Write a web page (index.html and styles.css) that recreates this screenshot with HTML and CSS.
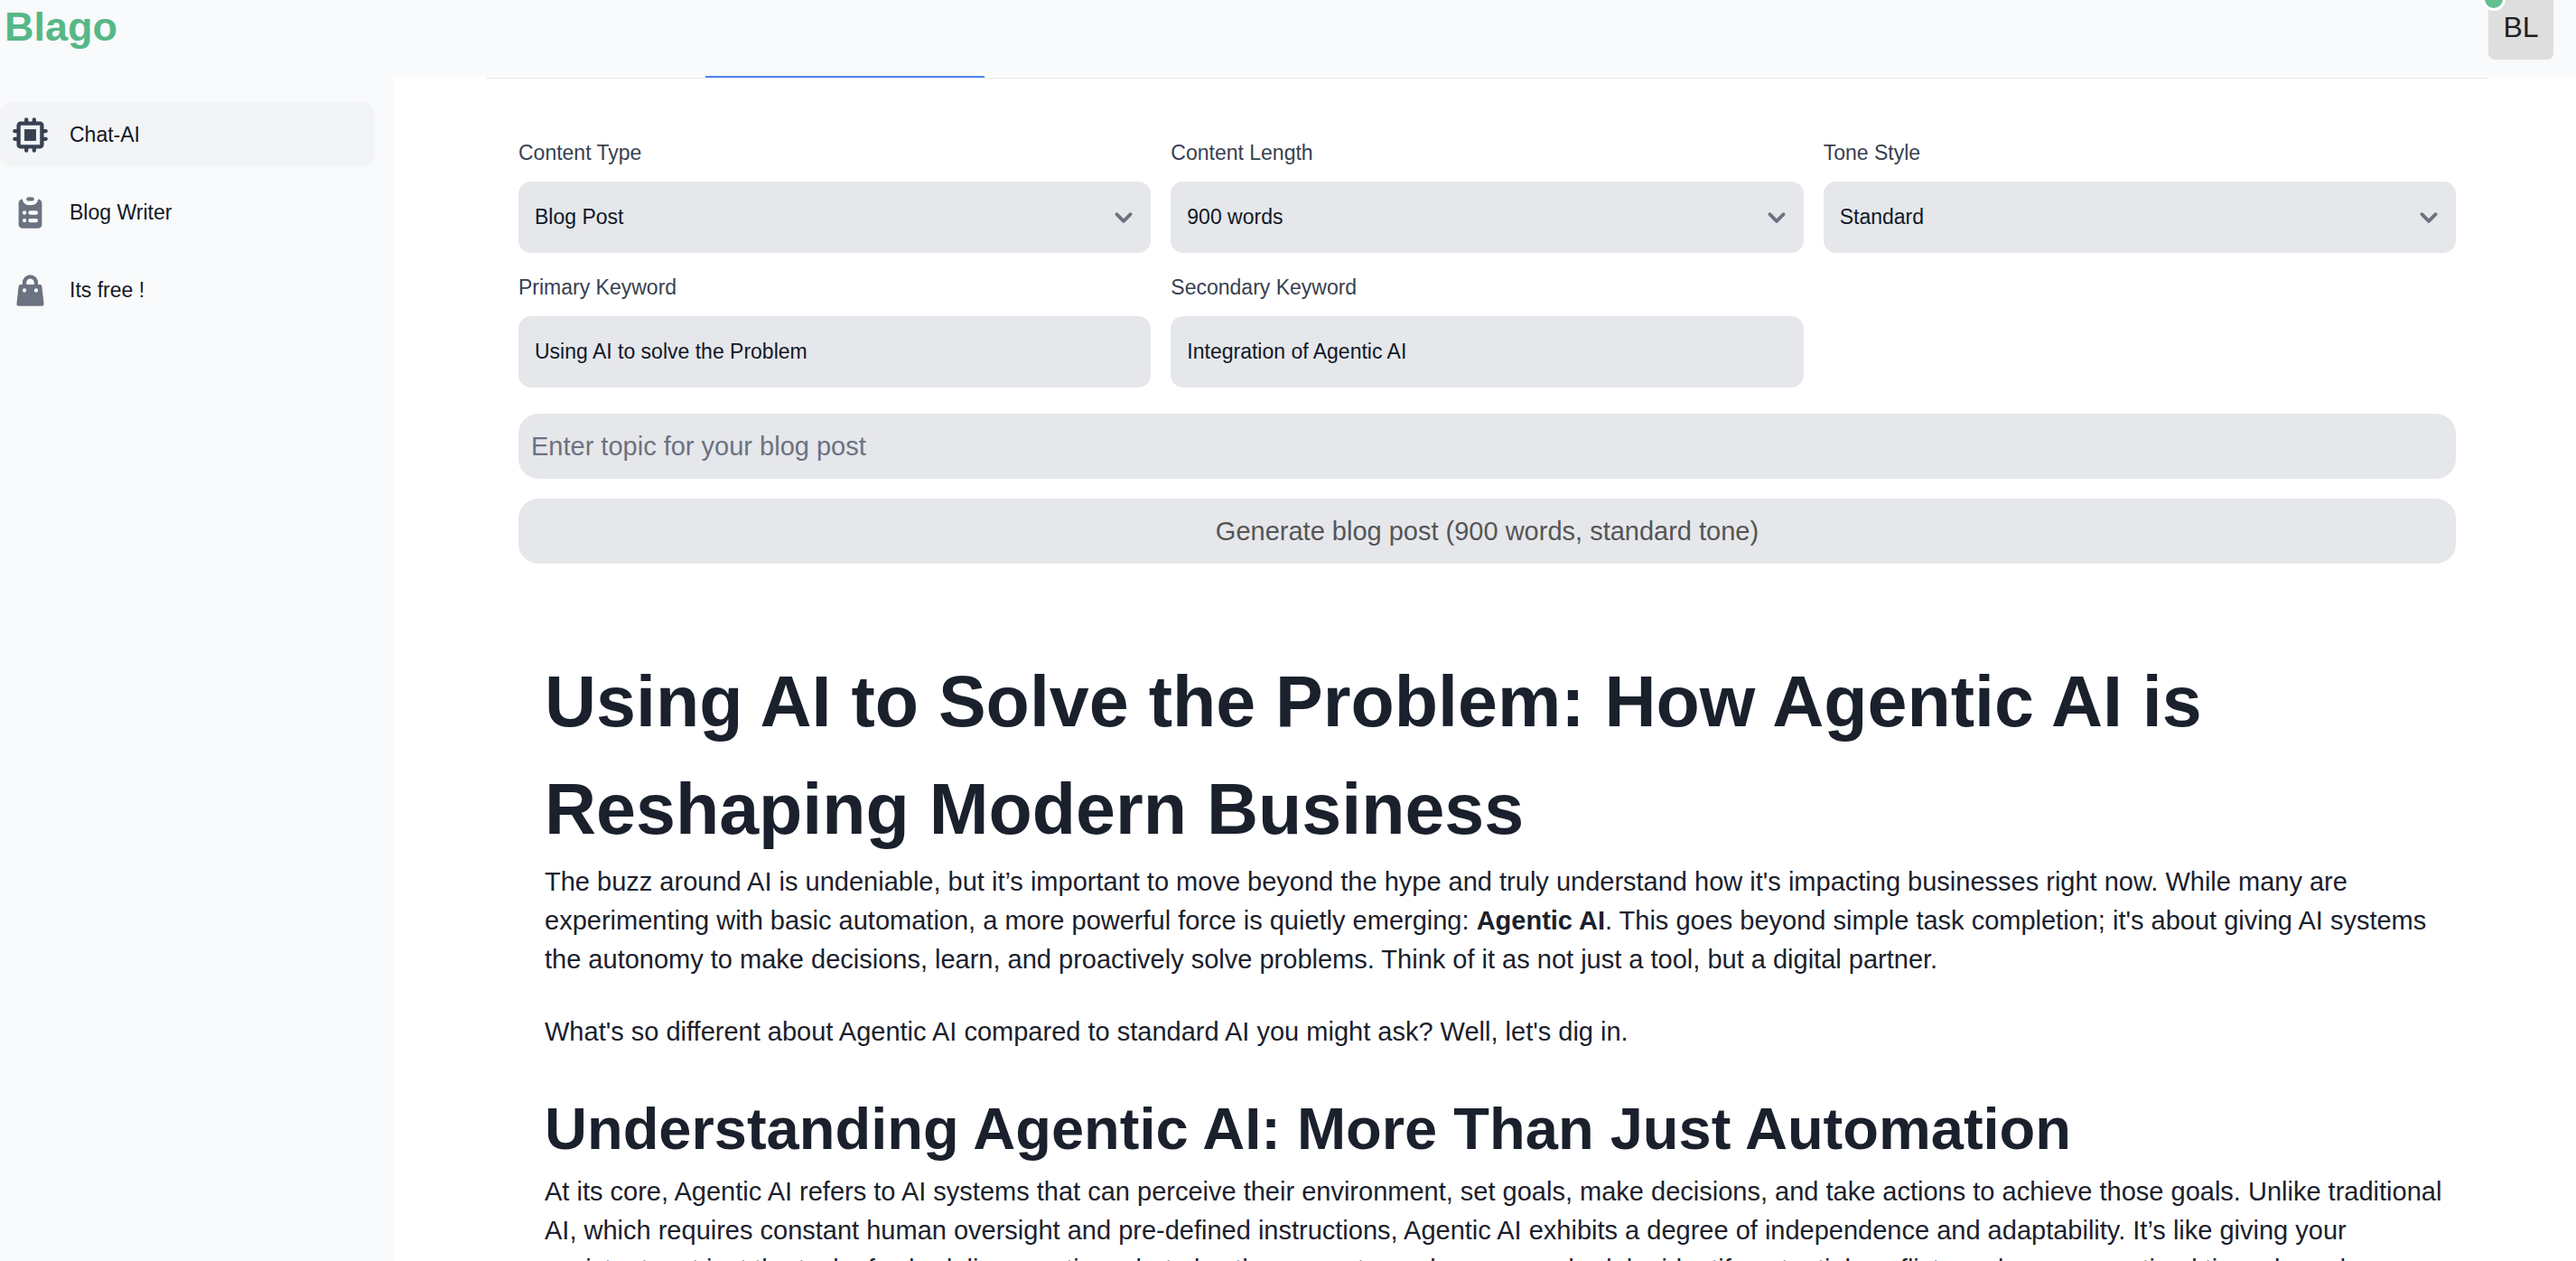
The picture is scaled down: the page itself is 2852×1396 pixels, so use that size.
FILE: index.html
```html
<!DOCTYPE html>
<html lang="en">
<head>
<meta charset="utf-8">
<meta name="viewport" content="width=device-width, initial-scale=1">
<title>Blago</title>
<link rel="stylesheet" href="styles.css">
</head>
<body>
<header class="topbar">
  <a class="brand" href="#">Blago</a>
  <button class="avatar" type="button" aria-label="Account">BL<span class="status"></span></button>
</header>
<div class="layout">
  <aside class="sidebar">
    <nav class="menu">
      <a class="menu-item active" href="#">
        <svg class="icon" viewBox="0 0 20 20" fill="currentColor" aria-hidden="true"><path d="M13 7H7v6h6V7z"/><path fill-rule="evenodd" d="M7 2a1 1 0 012 0v1h2V2a1 1 0 112 0v1h2a2 2 0 012 2v2h1a1 1 0 110 2h-1v2h1a1 1 0 110 2h-1v2a2 2 0 01-2 2h-2v1a1 1 0 11-2 0v-1H9v1a1 1 0 11-2 0v-1H5a2 2 0 01-2-2v-2H2a1 1 0 110-2h1V9H2a1 1 0 010-2h1V5a2 2 0 012-2h2V2zM5 5h10v10H5V5z" clip-rule="evenodd"/></svg>
        <span>Chat-AI</span>
      </a>
      <a class="menu-item" href="#">
        <svg class="icon" viewBox="0 0 20 20" fill="currentColor" aria-hidden="true"><path d="M9 2a1 1 0 000 2h2a1 1 0 100-2H9z"/><path fill-rule="evenodd" d="M4 5a2 2 0 012-2 3 3 0 003 3h2a3 3 0 003-3 2 2 0 012 2v11a2 2 0 01-2 2H6a2 2 0 01-2-2V5zm3 4a1 1 0 000 2h.01a1 1 0 100-2H7zm3 0a1 1 0 000 2h3a1 1 0 100-2h-3zm-3 4a1 1 0 100 2h.01a1 1 0 100-2H7zm3 0a1 1 0 100 2h3a1 1 0 100-2h-3z" clip-rule="evenodd"/></svg>
        <span>Blog Writer</span>
      </a>
      <a class="menu-item" href="#">
        <svg class="icon" viewBox="0 0 20 20" fill="currentColor" aria-hidden="true"><path fill-rule="evenodd" d="M10 2a4 4 0 00-4 4v1H5a1 1 0 00-.994.89l-1 9A1 1 0 004 18h12a1 1 0 00.994-1.11l-1-9A1 1 0 0015 7h-1V6a4 4 0 00-4-4zm2 5V6a2 2 0 10-4 0v1h4zm-6 3a1 1 0 112 0 1 1 0 01-2 0zm7-1a1 1 0 100 2 1 1 0 000-2z" clip-rule="evenodd"/></svg>
        <span>Its free !</span>
      </a>
    </nav>
  </aside>
  <main class="content">
    <div class="tabs"><span class="tab-marker"></span></div>
    <form class="writer">
      <div class="fields">
        <div class="field">
          <label for="type">Content Type</label>
          <select id="type" class="control"><option>Blog Post</option></select>
        </div>
        <div class="field">
          <label for="length">Content Length</label>
          <select id="length" class="control"><option>900 words</option></select>
        </div>
        <div class="field">
          <label for="tone">Tone Style</label>
          <select id="tone" class="control"><option>Standard</option></select>
        </div>
        <div class="field">
          <label for="primary">Primary Keyword</label>
          <input id="primary" class="control" type="text" value="Using AI to solve the Problem">
        </div>
        <div class="field">
          <label for="secondary">Secondary Keyword</label>
          <input id="secondary" class="control" type="text" value="Integration of Agentic AI">
        </div>
      </div>
      <input class="wide topic" type="text" aria-label="Topic" placeholder="Enter topic for your blog post">
      <button class="wide generate" type="button">Generate blog post (900 words, standard tone)</button>
    </form>
    <article class="post">
      <h1>Using AI to Solve the Problem: How Agentic AI is Reshaping Modern Business</h1>
      <p>The buzz around AI is undeniable, but it’s important to move beyond the hype and truly understand how it's impacting businesses right now. While many are experimenting with basic automation, a more powerful force is quietly emerging: <strong>Agentic AI</strong>. This goes beyond simple task completion; it's about giving AI systems the autonomy to make decisions, learn, and proactively solve problems. Think of it as not just a tool, but a digital partner.</p>
      <p>What's so different about Agentic AI compared to standard AI you might ask? Well, let's dig in.</p>
      <h2>Understanding Agentic AI: More Than Just Automation</h2>
      <p>At its core, Agentic AI refers to AI systems that can perceive their environment, set goals, make decisions, and take actions to achieve those goals. Unlike traditional AI, which requires constant human oversight and pre-defined instructions, Agentic AI exhibits a degree of independence and adaptability. It’s like giving your assistant, not just the task of scheduling meetings, but also the power to analyze your schedule, identify potential conflicts and propose optimal times based</p>
    </article>
  </main>
</div>
</body>
</html>
```

FILE: styles.css
```css
*,
*::before,
*::after {
  box-sizing: border-box;
}

html,
body {
  height: 100%;
}

body {
  margin: 0;
  display: flex;
  flex-direction: column;
  overflow: hidden;
  background: #fff;
  color: #111827;
  font-family: "Liberation Sans", Arial, sans-serif;
  font-size: 29px;
  line-height: 43px;
}

button,
input,
select {
  margin: 0;
  border: 0;
  font: inherit;
  color: inherit;
}

.topbar {
  flex: none;
  display: flex;
  justify-content: space-between;
  align-items: flex-start;
  height: 84px;
  padding: 0 25px 0 5px;
  background: #f9fafb;
}

.brand {
  padding-top: 3px;
  color: #56b887;
  font-size: 45px;
  font-weight: 700;
  line-height: 54px;
  text-decoration: none;
}

.avatar {
  position: relative;
  width: 72px;
  height: 66px;
  padding: 0 0 6px;
  border-radius: 0 0 7px 7px;
  background: #dedede;
  color: #212121;
  font-size: 32px;
}

.status {
  position: absolute;
  top: -14px;
  left: -7px;
  width: 26px;
  height: 26px;
  border: 3px solid #fff;
  border-radius: 50%;
  background: #62c08e;
}

.layout {
  flex: 1;
  min-height: 0;
  display: flex;
}

.sidebar {
  flex: none;
  width: 437px;
  padding: 29px 22px 0 0;
  border-top-right-radius: 7px;
  background: #f9fafb;
}

.menu {
  display: flex;
  flex-direction: column;
  gap: 14px;
  font-size: 23px;
}

.menu-item {
  display: flex;
  align-items: center;
  gap: 22px;
  height: 72px;
  padding-left: 12px;
  border-radius: 14px;
  color: #111827;
  text-decoration: none;
}

.menu-item.active {
  background: #f3f4f6;
}

.icon {
  width: 43px;
  height: 43px;
  color: #6b7280;
}

.active .icon {
  color: #374151;
}

.content {
  flex: 1;
  min-width: 0;
  padding: 0 97px 0 101px;
}

.tabs {
  height: 3px;
  padding-left: 243px;
  border-bottom: 1px solid #e5e7eb;
}

.tab-marker {
  display: block;
  width: 309px;
  height: 2px;
  background: #4f83f1;
}

.writer {
  display: flex;
  flex-direction: column;
  gap: 22px;
  padding: 61px 36px 0;
}

.fields {
  display: grid;
  grid-template-columns: repeat(3, 1fr);
  gap: 17px 22px;
  padding-bottom: 7px;
  font-size: 23px;
}

.field {
  display: flex;
  flex-direction: column;
  gap: 11px;
}

.field label {
  color: #374151;
  line-height: 42px;
}

.control {
  width: 100%;
  height: 79px;
  padding: 0 18px;
  border-radius: 14px;
  background: #e5e7eb;
}

select.control {
  appearance: none;
  background: #e5e7eb url("data:image/svg+xml,%3Csvg xmlns='http://www.w3.org/2000/svg' fill='none' viewBox='0 0 20 20'%3E%3Cpath stroke='%236b7280' stroke-linecap='round' stroke-linejoin='round' stroke-width='2' d='M6 8l4 4 4-4'/%3E%3C/svg%3E") right 11px center / 38px 38px no-repeat;
}

.wide {
  width: 100%;
  height: 72px;
  border-radius: 22px;
  background: #e5e7eb;
}

.topic {
  padding: 0 14px;
}

.topic::placeholder {
  color: #6b7280;
  opacity: 1;
}

.generate {
  color: #555;
}

.post {
  padding: 93px 36px 0 65px;
  color: #1a202c;
}

.post h1 {
  margin: 0;
  font-size: 79px;
  line-height: 119px;
}

.post h2 {
  margin: 0;
  font-size: 65px;
  line-height: 97px;
}

.post p {
  margin: 0 0 37px;
}
```
